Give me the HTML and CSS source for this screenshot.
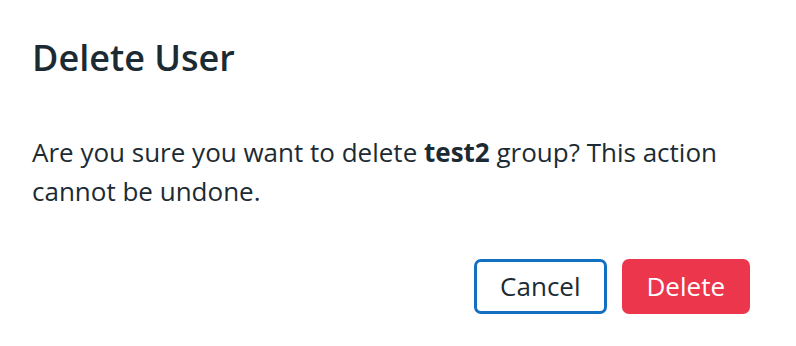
FILE: index.html
```html
<!DOCTYPE html>
<html lang="en">
  <head>
    <meta charset="UTF-8" />
    <meta name="viewport" content="width=device-width, initial-scale=1.0" />
    <title>Delete User</title>
    <link rel="stylesheet" href="styles.css">
  </head>
  <body>
    <!-- Confirm dialog -->
    <div class="dialog">
      <h1 class="dialog-title">Delete User</h1>
      <p class="dialog-text">
        Are you sure you want to delete <strong>test2</strong> group? This action cannot be undone.
      </p>
      <div class="dialog-actions">
        <button class="btn btn-cancel">Cancel</button>
        <button class="btn btn-delete">Delete</button>
      </div>
    </div>
  </body>
</html>
```

FILE: styles.css
```css
body {
  font-family: "Open Sans", sans-serif;
  margin: 0;
  padding: 0;
  background: #fff;
  color: #1c2b33;
}
.dialog {
  width: 796px;
  height: 346px;
  box-sizing: border-box;
  padding: 34px 32px 0 32px;
  background: white;
  border-radius: 3px;
}
.dialog-title {
  margin: 0;
  font-size: 36px;
  line-height: 48px;
  font-weight: 600;
}
.dialog-text {
  margin: 51px 0 0 0;
  font-size: 26px;
  line-height: 39px;
}
.dialog-text strong {
  font-weight: 700;
}
.dialog-actions {
  display: flex;
  justify-content: flex-end;
  gap: 15px;
  margin-top: 48px;
  padding-right: 14px;
}
.btn {
  font-family: "Open Sans", sans-serif;
  font-size: 26px;
  line-height: 39px;
  padding: 5px 23px;
  border-radius: 7px;
  border: 3px solid transparent;
  cursor: pointer;
}
.btn-cancel {
  background: white;
  border-color: #1170c0;
  color: #1c2b33;
}
.btn-delete {
  background: #ec364b;
  border-color: #ec364b;
  color: white;
  padding: 5px 22px;
}
```
